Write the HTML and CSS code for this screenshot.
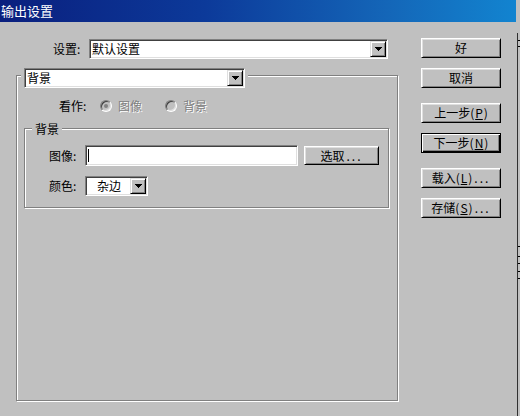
FILE: index.html
```html
<!DOCTYPE html>
<html lang="zh">
<head>
<meta charset="utf-8">
<title>输出设置</title>
<link rel="stylesheet" href="styles.css">
</head>
<body>
<div class="screen">
  <div class="dialog">
    <div class="titlebar">输出设置</div>
    <div class="body">
      <div class="main">
        <div class="settings-row">
          <span class="lbl-set">设置:</span>
          <div class="combo combo-set">
            <span class="combo-text">默认设置</span>
            <span class="dd"><svg width="7" height="4" viewBox="0 0 7 4" shape-rendering="crispEdges"><rect x="0" y="0" width="7" height="1"/><rect x="1" y="1" width="5" height="1"/><rect x="2" y="2" width="3" height="1"/><rect x="3" y="3" width="1" height="1"/></svg></span>
          </div>
        </div>
        <div class="group">
          <div class="legend-combo">
            <div class="combo combo-bg">
              <span class="combo-text">背景</span>
              <span class="dd"><svg width="7" height="4" viewBox="0 0 7 4" shape-rendering="crispEdges"><rect x="0" y="0" width="7" height="1"/><rect x="1" y="1" width="5" height="1"/><rect x="2" y="2" width="3" height="1"/><rect x="3" y="3" width="1" height="1"/></svg></span>
            </div>
          </div>
          <div class="view-row">
            <span class="view-lbl">看作:</span>
            <span class="radio checked"></span>
            <span class="disabled-text">图像</span>
            <span class="radio radio-second"></span>
            <span class="disabled-text">背景</span>
          </div>
          <div class="subgroup">
            <div class="legend">背景</div>
            <div class="field-row">
              <span class="field-lbl">图像:</span>
              <div class="input"><span class="caret"></span></div>
              <div class="btn btn-pick">选取<span class="dots">...</span></div>
            </div>
            <div class="field-row">
              <span class="field-lbl">颜色:</span>
              <div class="combo combo-small">
                <span class="combo-text center">杂边</span>
                <span class="dd"><svg width="7" height="4" viewBox="0 0 7 4" shape-rendering="crispEdges"><rect x="0" y="0" width="7" height="1"/><rect x="1" y="1" width="5" height="1"/><rect x="2" y="2" width="3" height="1"/><rect x="3" y="3" width="1" height="1"/></svg></span>
              </div>
            </div>
          </div>
        </div>
      </div>
      <div class="buttons">
        <div class="btn">好</div>
        <div class="btn gap-s">取消</div>
        <div class="btn gap-l">上一步(<u>P</u>)</div>
        <div class="btn default gap-s">下一步(<u>N</u>)</div>
        <div class="btn gap-l">载入(<u>L</u>)<span class="dots">...</span></div>
        <div class="btn gap-s">存储(<u>S</u>)<span class="dots">...</span></div>
      </div>
    </div>
  </div>
  <div class="edge">
    <div class="edge-top"></div>
    <div class="edge-line">
      <div class="tick t1"></div>
      <div class="tick t2"></div>
      <div class="tick t3"></div>
      <div class="tick t4"></div>
      <div class="tick t5"></div>
      <div class="tick t6"></div>
      <div class="tick t7"></div>
    </div>
  </div>
</div>
</body>
</html>
```

FILE: styles.css
```css
html, body {
  margin: 0;
  padding: 0;
  background: #c0c0c0;
}

body {
  font-family: "Noto Sans CJK SC", "Liberation Sans", sans-serif;
  font-size: 12px;
  line-height: 14px;
  color: #000;
}

.screen {
  width: 520px;
  height: 416px;
  display: flex;
  overflow: hidden;
  background: #c0c0c0;
}

.dialog {
  width: 516px;
  flex: none;
}

.titlebar {
  height: 22px;
  line-height: 22px;
  padding-left: 1px;
  color: #fff;
  font-size: 13px;
  background: linear-gradient(90deg, #0a1f7e 0%, #0c3a9a 40%, #1466b8 75%, #1284d0 100%);
}

.body {
  display: flex;
  padding-top: 16px;
}

.main {
  width: 405px;
  flex: none;
}

.settings-row {
  display: flex;
  align-items: center;
  margin-top: 1px;
  padding-left: 53px;
}

.lbl-set {
  width: 36px;
}

/* sunken field */
.combo,
.input {
  box-sizing: border-box;
  background: #fff;
  border: 1px solid;
  border-color: #808080 #fff #fff #808080;
  box-shadow: inset 1px 1px 0 #404040, inset -1px -1px 0 #dfdfdf;
}

.combo {
  height: 20px;
  display: flex;
  align-items: center;
  padding: 1px;
}

.combo-set {
  width: 299px;
}

.combo-bg {
  width: 221px;
}

.combo-small {
  width: 63px;
}

.combo-text {
  flex: 1;
  padding-left: 1px;
  line-height: 16px;
  white-space: nowrap;
}

.combo-text.center {
  text-align: center;
}

.dd {
  width: 16px;
  height: 16px;
  box-sizing: border-box;
  flex: none;
  background: #c0c0c0;
  border: 1px solid;
  border-color: #dfdfdf #000 #000 #dfdfdf;
  box-shadow: inset 1px 1px 0 #fff, inset -1px -1px 0 #808080;
  display: flex;
  align-items: center;
  justify-content: center;
}

.dd svg {
  display: block;
  fill: #000;
}

/* etched group boxes */
.group,
.subgroup {
  box-sizing: border-box;
  border: 1px solid #808080;
  box-shadow: inset 1px 1px 0 #fff, 1px 1px 0 #fff;
}

.group {
  margin: 16px 0 0 16px;
  width: 382px;
  height: 326px;
}

.legend-combo {
  margin: -8px 0 0 4px;
  padding: 0 3px;
  width: fit-content;
  background: #c0c0c0;
}

.view-row {
  display: flex;
  align-items: center;
  height: 16px;
  margin-top: 10px;
  padding-left: 42px;
}

.view-lbl {
  width: 41px;
}

.radio {
  width: 12px;
  height: 12px;
  box-sizing: border-box;
  border-radius: 50%;
  border: 1px solid;
  border-color: #808080 #fff #fff #808080;
  box-shadow: inset 1px 1px 0 #404040, inset -1px -1px 0 #dfdfdf;
  background: #c0c0c0;
  margin-right: 6px;
  display: flex;
  align-items: center;
  justify-content: center;
  flex: none;
}

.radio.checked::after {
  content: "";
  width: 4px;
  height: 4px;
  border-radius: 50%;
  background: #808080;
}

.radio-second {
  margin-left: 23px;
}

.disabled-text {
  color: #808080;
  text-shadow: 1px 1px 0 #fff;
}

.subgroup {
  margin: 14px 0 0 7px;
  width: 365px;
  height: 80px;
}

.legend {
  margin: -7px 0 0 7px;
  padding: 0 3px;
  height: 13px;
  line-height: 13px;
  width: fit-content;
  background: #c0c0c0;
}

.field-row {
  display: flex;
  align-items: center;
  margin-top: 10px;
  padding-left: 24px;
}

.field-lbl {
  width: 36px;
}

.input {
  width: 213px;
  height: 21px;
  display: flex;
  align-items: center;
  padding-left: 2px;
}

.caret {
  width: 1px;
  height: 13px;
  background: #000;
}

/* raised buttons */
.btn {
  box-sizing: border-box;
  width: 80px;
  height: 20px;
  background: #c0c0c0;
  border: 1px solid;
  border-color: #fff #000 #000 #fff;
  box-shadow: inset 1px 1px 0 #dfdfdf, inset -1px -1px 0 #808080;
  display: flex;
  align-items: center;
  justify-content: center;
  line-height: 14px;
  white-space: nowrap;
}

.btn.default {
  border-color: #000;
  box-shadow: inset 1px 1px 0 #fff, inset -1px -1px 0 #000, inset -2px -2px 0 #808080;
}

.btn-pick {
  width: 75px;
  height: 19px;
  margin-left: 6px;
}

.btn u {
  margin: 0 1px;
}

.dots {
  letter-spacing: 2px;
  margin-left: 2px;
}

.buttons {
  margin-left: 16px;
  width: 80px;
  display: flex;
  flex-direction: column;
}

.gap-s {
  margin-top: 10px;
}

.gap-l {
  margin-top: 15px;
}

/* edge of window behind */
.edge {
  width: 4px;
  flex: none;
  display: flex;
  flex-direction: column;
}

.edge-top {
  height: 33px;
  flex: none;
}

.edge-line {
  flex: 1;
  margin-left: 1px;
  border-left: 1px solid #303030;
  display: flex;
  flex-direction: column;
}

.tick {
  width: 2px;
  height: 1px;
  background: #000;
}

.t1 { margin-top: 7px; }
.t2 { margin-top: 5px; }
.t3 { margin-top: 199px; }
.t4 { margin-top: 9px; }
.t5 { margin-top: 6px; }
.t6 { margin-top: 7px; }
.t7 { margin-top: 6px; }
```
